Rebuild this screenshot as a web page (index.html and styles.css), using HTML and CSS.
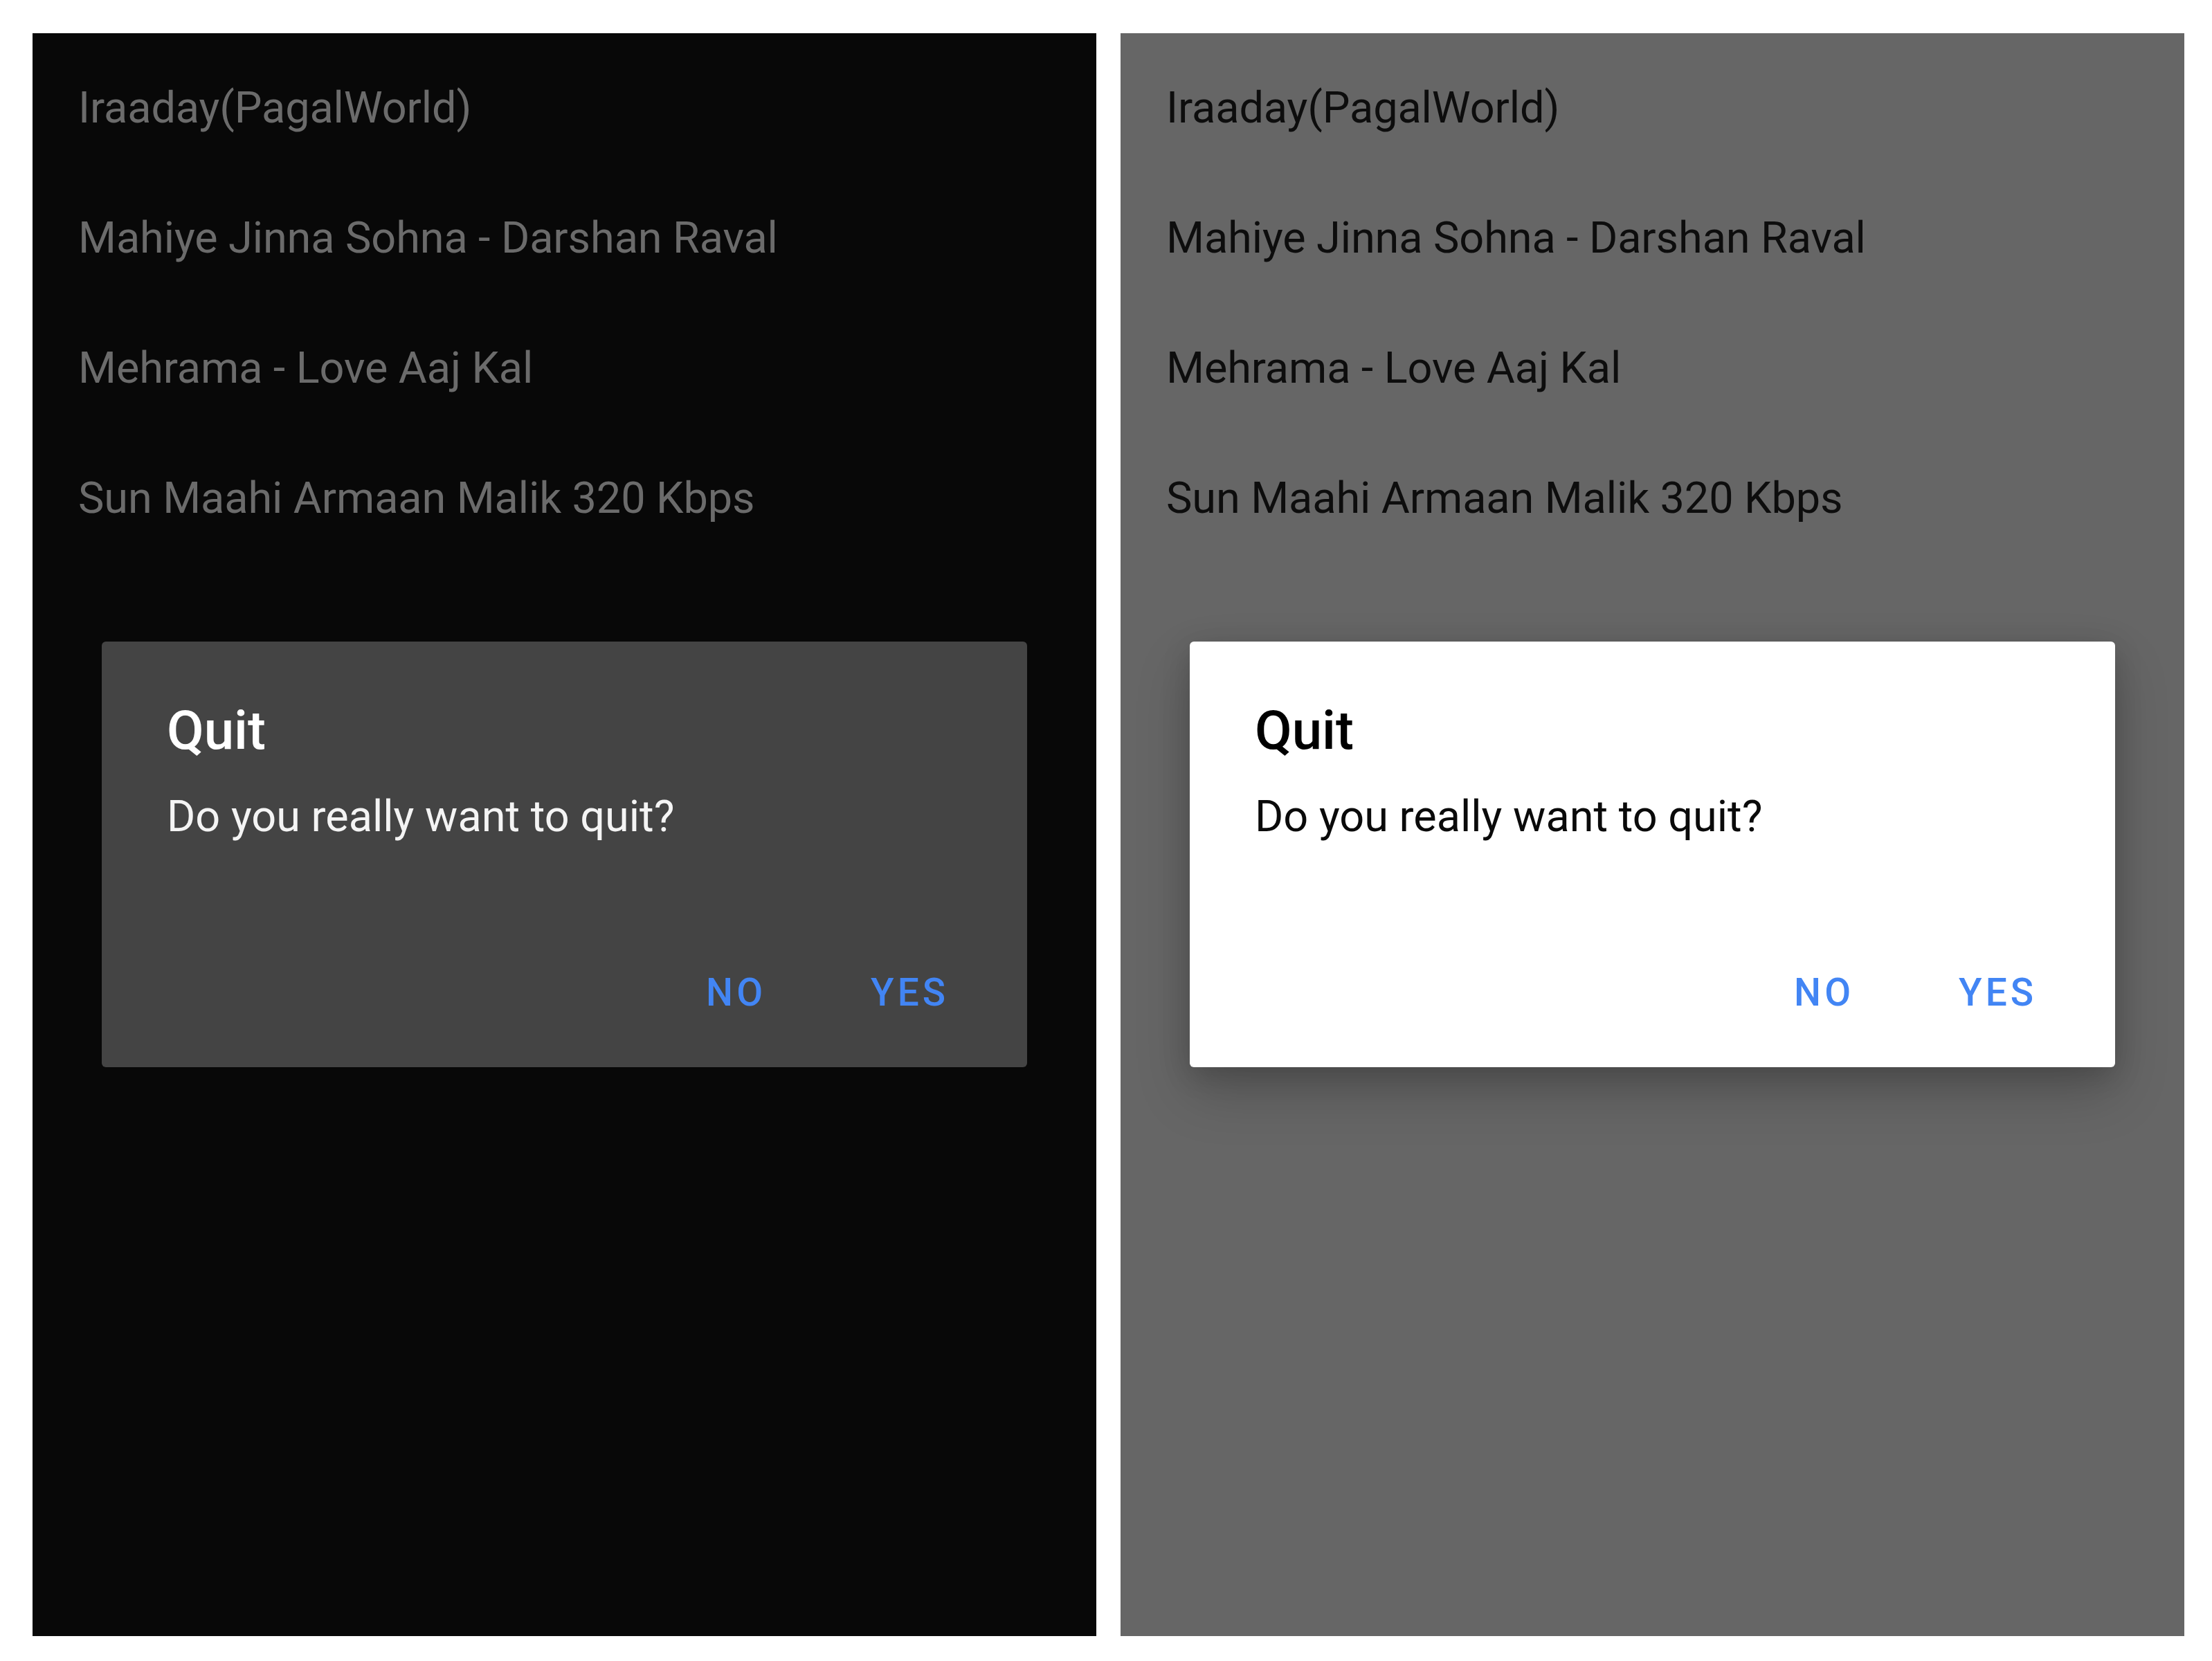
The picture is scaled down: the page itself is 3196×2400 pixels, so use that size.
FILE: index.html
```html
<!DOCTYPE html>
<html lang="en">
<head>
<meta charset="utf-8">
<title>Quit dialog – dark and light</title>
<link rel="stylesheet" href="styles.css">
</head>
<body>
<main class="stage">
  <section class="screen screen--dark">
    <ul class="songs">
      <li class="song">Iraaday(PagalWorld)</li>
      <li class="song">Mahiye Jinna Sohna - Darshan Raval</li>
      <li class="song">Mehrama - Love Aaj Kal</li>
      <li class="song">Sun Maahi Armaan Malik 320 Kbps</li>
    </ul>
    <div class="dialog">
      <h2 class="dialog-title">Quit</h2>
      <p class="dialog-body">Do you really want to quit?</p>
      <div class="dialog-actions">
        <button class="dialog-btn">NO</button>
        <button class="dialog-btn">YES</button>
      </div>
    </div>
  </section>
  <section class="screen screen--light">
    <ul class="songs">
      <li class="song">Iraaday(PagalWorld)</li>
      <li class="song">Mahiye Jinna Sohna - Darshan Raval</li>
      <li class="song">Mehrama - Love Aaj Kal</li>
      <li class="song">Sun Maahi Armaan Malik 320 Kbps</li>
    </ul>
    <div class="dialog">
      <h2 class="dialog-title">Quit</h2>
      <p class="dialog-body">Do you really want to quit?</p>
      <div class="dialog-actions">
        <button class="dialog-btn">NO</button>
        <button class="dialog-btn">YES</button>
      </div>
    </div>
  </section>
</main>
</body>
</html>
```

FILE: styles.css
```css
html, body {
  margin: 0;
  padding: 0;
  background: #ffffff;
}

body {
  font-family: Roboto, "Noto Sans", "Liberation Sans", sans-serif;
}

.stage {
  display: flex;
  gap: 35px;
  padding: 48px 0 0 47px;
}

.screen {
  width: 1537px;
  height: 2316px;
  flex: 0 0 auto;
  display: flex;
  flex-direction: column;
}

.screen--dark {
  background: #080808;
}

.screen--light {
  background: #666666;
}

.songs {
  list-style: none;
  margin: 0;
  padding: 14px 0 0 66px;
}

.song {
  height: 188px;
  line-height: 188px;
  font-size: 63px;
  font-weight: 400;
  letter-spacing: -0.1px;
  white-space: nowrap;
}

.screen--dark .song {
  color: #6b6b6b;
}

.screen--light .song {
  color: #0d0d0d;
}

.dialog {
  margin: 113px 0 0 100px;
  width: 1337px;
  height: 615px;
  box-sizing: border-box;
  border-radius: 6px;
  padding: 83px 113px 0 94px;
  display: flex;
  flex-direction: column;
}

.screen--dark .dialog {
  background: #444444;
}

.screen--light .dialog {
  background: #ffffff;
  box-shadow: 0 36px 80px rgba(0, 0, 0, 0.2), 0 10px 40px rgba(0, 0, 0, 0.16);
}

.dialog-title {
  margin: 0;
  font-size: 78px;
  font-weight: 500;
  line-height: normal;
}

.dialog-body {
  margin: 42px 0 0;
  font-size: 63px;
  font-weight: 400;
  line-height: normal;
}

.screen--dark .dialog-title { color: #ffffff; }
.screen--dark .dialog-body { color: #f4f4f4; }
.screen--light .dialog-title { color: #000000; }
.screen--light .dialog-body { color: #0a0a0a; }

.dialog-actions {
  margin-top: auto;
  margin-bottom: 76px;
  display: flex;
  justify-content: flex-end;
  gap: 151px;
}

.dialog-btn {
  background: none;
  border: 0;
  padding: 0;
  margin: 0;
  font-family: inherit;
  font-size: 55px;
  font-weight: 500;
  letter-spacing: 5px;
  line-height: normal;
  color: #4285f4;
}
```
